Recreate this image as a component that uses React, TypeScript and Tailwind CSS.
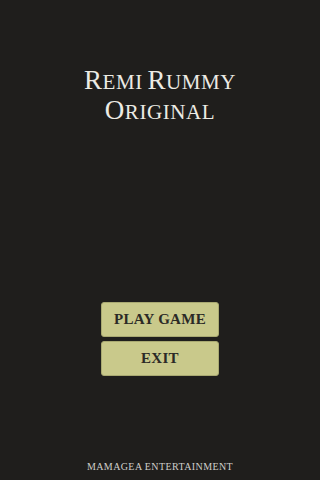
import React from "react";

const serif = { fontFamily: '"Liberation Serif", "DejaVu Serif", serif' };

function SC({ text, big, small }: { text: string; big: string; small: string }) {
  return (
    <>
      {text.split(" ").map((w, i) => (
        <React.Fragment key={i}>
          {i > 0 && " "}
          <span className={big}>{w[0].toUpperCase()}</span>
          <span className={small}>{w.slice(1).toUpperCase()}</span>
        </React.Fragment>
      ))}
    </>
  );
}

export default function App() {
  return (
    <div
      className="w-[320px] h-[480px] bg-[#1f1e1c] flex flex-col items-center text-center"
      style={serif}
    >
      <div className="pt-[67px] text-[#ecebe4] leading-[27px] tracking-[0.6px]">
        <div>
          <SC text="Remi Rummy" big="text-[27px]" small="text-[21px]" />
        </div>
        <div>
          <SC text="Original" big="text-[27px]" small="text-[21px]" />
        </div>
      </div>
      <div className="mt-[175px] flex flex-col gap-[4px]">
        <button className="w-[118px] h-[35px] bg-[#c9c98b] border border-[#a9a972] rounded-[3px] text-[#2b2a26] text-[15px] font-bold leading-none tracking-[0.3px]">
          PLAY GAME
        </button>
        <button className="w-[118px] h-[35px] bg-[#c9c98b] border border-[#a9a972] rounded-[3px] text-[#2b2a26] text-[15px] font-bold leading-none tracking-[0.3px]">
          EXIT
        </button>
      </div>
      <div className="mt-auto mb-[6px] text-[10px] text-[#cfcfcb] tracking-[0.4px]">
        MAMAGEA ENTERTAINMENT
      </div>
    </div>
  );
}
